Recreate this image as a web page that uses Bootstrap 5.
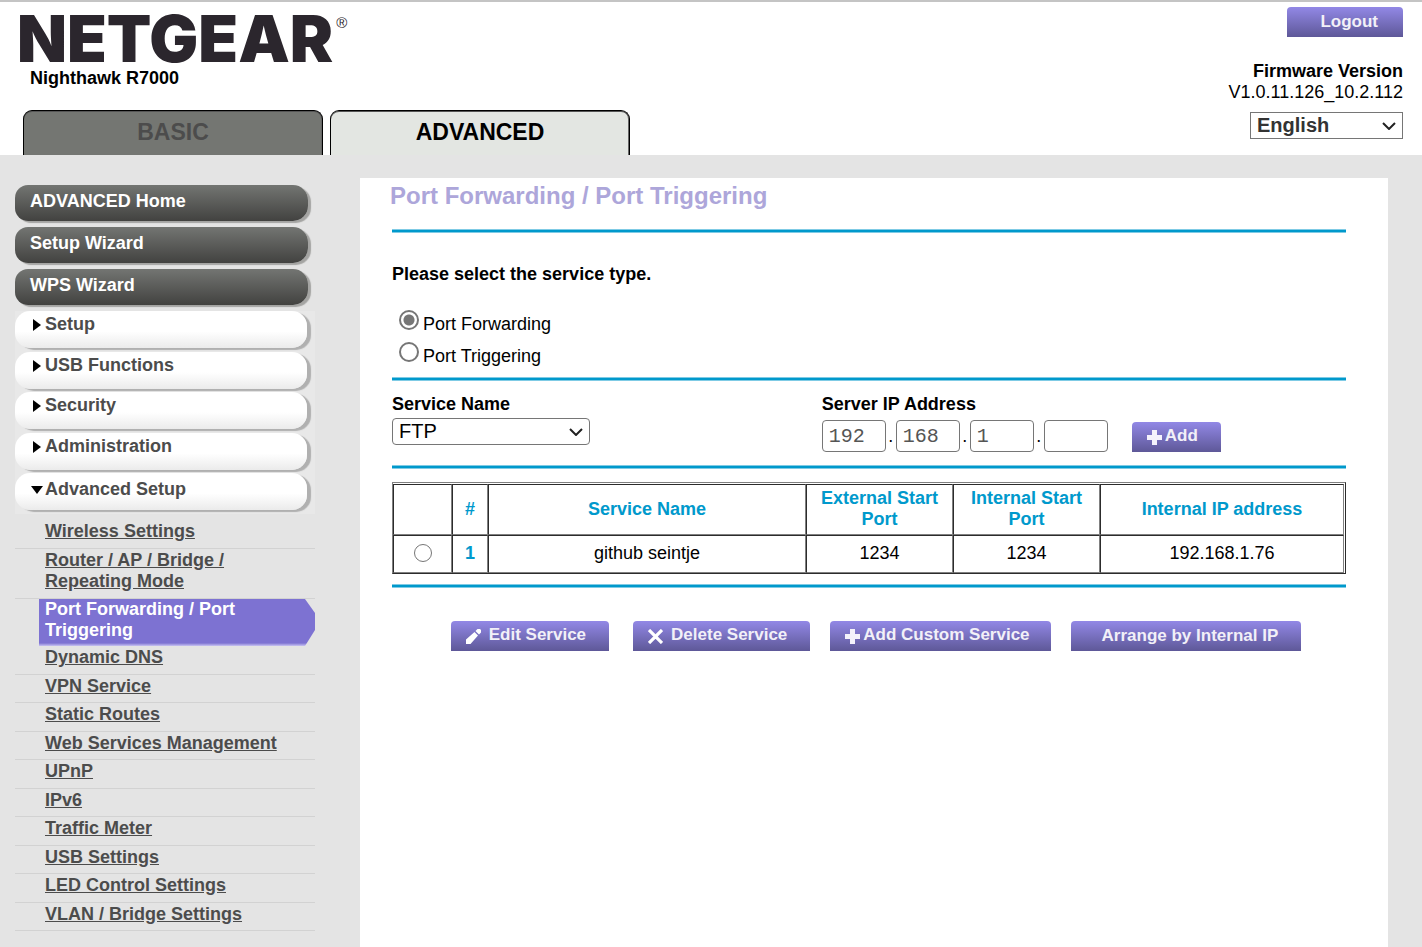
<!DOCTYPE html>
<html lang="en">
<head>
<meta charset="utf-8">
<meta name="viewport" content="width=device-width, initial-scale=1">
<title>NETGEAR Router R7000</title>
<link href="https://cdn.jsdelivr.net/npm/bootstrap@5.3.0/dist/css/bootstrap.min.css" rel="stylesheet">
<style>
  body { font-family: "Liberation Sans", Arial, sans-serif; font-size: 18px; line-height: 21px; color: #000; background: #e4e4e4; }

  /* header */
  .top-bar { background: #fff; border-top: 2px solid #c4c4c4; height: 155px; }
  .brand { padding: 10px 0 0 17px; }
  .wordmark { display: flex; gap: 3px; font-family: Inter, "Liberation Sans", sans-serif; font-weight: 900; font-size: 65px; line-height: 54px; color: #2b262d; }
  .wordmark span { font-family: "Liberation Sans", Arial, sans-serif; font-size: 15px; font-weight: 400; line-height: 22px; }
  .model { padding: 2px 0 0 13px; }
  .account { padding: 5px 19px 0 0; }
  .firmware { margin-top: 24px; }
  .lang-pick { width: 153px; height: 27px; margin-top: 9px; font-weight: bold; color: #333; border: 1px solid #767676; }

  .pick { appearance: none; font-size: 20px; line-height: 22px; padding: 0 24px 2px 6px; background: #fff url("data:image/svg+xml,%3Csvg xmlns='http://www.w3.org/2000/svg' width='14' height='8'%3E%3Cpath d='M1 1l6 6 6-6' fill='none' stroke='%23222' stroke-width='2'/%3E%3C/svg%3E") no-repeat right 6px center; }

  /* tabs */
  .mode-tabs { padding-left: 23px; gap: 7px; }
  .mode-tab { width: 300px; height: 45px; border: 1px solid #000; border-bottom: 0; border-radius: 9px 9px 0 0; box-shadow: inset 0 1px 0 #555, inset -1px 0 0 #666; font-size: 23px; line-height: 42px; font-weight: bold; text-align: center; text-decoration: none; }
  .mode-basic { background: #747672; color: #4c4c4c; }
  .mode-advanced { background: #e3e6e2; color: #000; }

  /* sidebar */
  .side { width: 360px; padding: 30px 45px 15px 15px; font-weight: bold; }
  .side a { display: block; }
  .dark-link { height: 36px; margin: 0 4px 6px 0; padding: 6px 15px; color: #fff; text-decoration: none; border-radius: 13px 15px 15px 13px; background: linear-gradient(#737572, #424240); }
  .dark-list a { width: 293px; box-shadow: 3px 2px 1px #a4a4a2; }
  .menu-list { background: #e8e8e8; }
  .menu-list li { height: 41px; }
  .menu-list li:nth-child(even) { height: 40px; }
  .menu-list a { width: 292px; height: 37px; padding: 3px 0 0 30px; position: relative; color: #4c4c4c; text-decoration: none; border-radius: 15px; background: linear-gradient(#fff 55%, #ebebeb); box-shadow: 4px 2px 1px #b0b0b0; }
  .menu-list a.open { padding-top: 6px; }
  .menu-list svg { position: absolute; left: 16px; top: 8px; }
  .menu-list .open svg { top: 10px; }
  .sub-list li { padding: 1px 30px 6px 30px; border-bottom: 1px solid #d2d2d2; }
  .sub-list li:nth-child(odd) { padding-bottom: 5px; }
  .sub-list li:first-child { padding-top: 7px; padding-bottom: 6px; }
  .sub-list a { color: #4c4c4c; }
  .sub-list li.current { margin-left: 24px; padding: 0 30px 5px 6px; border: 0; background: linear-gradient(#7d72d2 44px, #c9c4f2); clip-path: polygon(0 0, calc(100% - 10px) 0, 100% 14px, 100% 31px, calc(100% - 10px) 100%, 0 100%); }
  .sub-list .current a { color: #fff; text-decoration: none; }

  /* content */
  .panel { background: #fff; margin: 23px 34px 0 0; padding: 0 42px 40px 32px; min-width: 0; min-height: calc(100vh - 178px); }
  .page-title { font-size: 24px; line-height: 36px; font-weight: bold; color: #ada6da; margin: 0 0 15px -2px; }
  .rule { height: 4px; margin: 0; border: solid #7fcbe5; border-width: 1px 0; background: #0099cc; opacity: 1; }
  .ask { margin: 31px 0 25px; font-weight: bold; }
  .kinds { padding-bottom: 3px; }
  .kind { height: 32px; padding-left: 7px; gap: 4px; }
  .kind label { padding-top: 4px; }
  .dot { appearance: none; width: 20px; height: 20px; margin: 0; border: 2px solid #767676; border-radius: 50%; background: #fff; }
  .dot:checked { background: radial-gradient(circle, #767676 5px, #fff 6px); }
  .dot-row { width: 18px; height: 18px; display: block; margin: 0 auto; border-width: 1px; }
  .fields { display: grid; grid-template-columns: 82fr 100fr; height: 84px; padding-top: 13px; }
  .service-pick { width: 198px; height: 27px; margin-top: 3px; border: 1px solid #767676; border-radius: 4px; }
  .octet { width: 64px; height: 32px; border: 1px solid #767676; border-radius: 4px; padding: 0 6px; font: 20px/28px "Liberation Mono", monospace; color: #555; }
  .ip-row { margin-top: 5px; }
  .ip-row .stop { width: 10px; text-align: center; line-height: 32px; }

  .ntg-btn { height: 30px; border: 0; border-radius: 4px 4px 0 0; padding: 0 23px 3px 15px; font-size: 17px; line-height: 27px; font-weight: bold; color: #f2f0f8; background: linear-gradient(#9288e6, #5e5898); white-space: nowrap; display: inline-flex; align-items: center; }
  .ntg-btn svg { margin-top: 3px; flex: none; }
  .near { gap: 3px; }
  .apart { gap: 8px; }
  .plain { padding: 0 25px 1px 33px; }
  .actions .near { padding-right: 21px; }
  .actions .plain { padding-left: 31px; padding-right: 23px; }

  .rules-table { width: 100%; margin: 13px 0 10px; table-layout: fixed; border-collapse: separate; border-spacing: 0; border: 1px solid; border-color: #808080 #2c2c2c #2c2c2c #808080; padding: 1px 1px 0 0; text-align: center; }
  .rules-table th, .rules-table td { border: 1px solid; border-color: #2c2c2c #808080 #808080 #2c2c2c; }
  .rules-table th { color: #0099cc; padding: 3px 2px 4px; }
  .rules-table thead tr { height: 51px; }
  .rules-table tbody tr { height: 38px; }
  .rules-table td { padding: 0 2px 2px; }
  .w-pick { width: 59px; } .w-num { width: 36px; } .w-port { width: 147px; } .w-ip { width: 244px; }
  .actions { margin-top: 33px; padding-left: 14px; gap: 20px; }
</style>
</head>
<body>
<header class="top-bar d-flex justify-content-between">
  <div class="d-flex flex-column justify-content-between">
    <div class="brand">
      <div class="wordmark">NETGEAR<span>®</span></div>
      <div class="model fw-bold">Nighthawk R7000</div>
    </div>
    <nav class="mode-tabs d-flex">
      <a class="mode-tab mode-basic" href="#">BASIC</a>
      <a class="mode-tab mode-advanced" href="#">ADVANCED</a>
    </nav>
  </div>
  <div class="account d-flex flex-column align-items-end">
    <button type="button" class="ntg-btn plain">Logout</button>
    <div class="firmware text-end"><b>Firmware Version</b><br>V1.0.11.126_10.2.112</div>
    <select class="pick lang-pick" aria-label="Language"><option>English</option></select>
  </div>
</header>

<div class="d-flex">
  <nav class="side flex-shrink-0">
    <div class="dark-list">
      <a class="dark-link" href="#">ADVANCED Home</a>
      <a class="dark-link" href="#">Setup Wizard</a>
      <a class="dark-link" href="#">WPS Wizard</a>
    </div>
    <ul class="menu-list list-unstyled mb-0">
      <li><a href="#"><svg width="12" height="12"><path d="M2 0l8 6-8 6z"/></svg>Setup</a></li>
      <li><a href="#"><svg width="12" height="12"><path d="M2 0l8 6-8 6z"/></svg>USB Functions</a></li>
      <li><a href="#"><svg width="12" height="12"><path d="M2 0l8 6-8 6z"/></svg>Security</a></li>
      <li><a href="#"><svg width="12" height="12"><path d="M2 0l8 6-8 6z"/></svg>Administration</a></li>
      <li><a class="open" href="#"><svg width="12" height="12"><path d="M0 3h12l-6 8z"/></svg>Advanced Setup</a></li>
    </ul>
    <ul class="sub-list list-unstyled mb-0">
      <li><a href="#">Wireless Settings</a></li>
      <li><a href="#">Router / AP / Bridge / Repeating Mode</a></li>
      <li class="current"><a href="#">Port Forwarding / Port Triggering</a></li>
      <li><a href="#">Dynamic DNS</a></li>
      <li><a href="#">VPN Service</a></li>
      <li><a href="#">Static Routes</a></li>
      <li><a href="#">Web Services Management</a></li>
      <li><a href="#">UPnP</a></li>
      <li><a href="#">IPv6</a></li>
      <li><a href="#">Traffic Meter</a></li>
      <li><a href="#">USB Settings</a></li>
      <li><a href="#">LED Control Settings</a></li>
      <li><a href="#">VLAN / Bridge Settings</a></li>
    </ul>
  </nav>

  <main class="panel flex-grow-1">
    <h1 class="page-title">Port Forwarding / Port Triggering</h1>
    <hr class="rule">
    <p class="ask">Please select the service type.</p>
    <div class="kinds">
      <div class="kind d-flex align-items-start"><input class="dot" type="radio" name="kind" id="fwd" checked><label for="fwd">Port Forwarding</label></div>
      <div class="kind d-flex align-items-start"><input class="dot" type="radio" name="kind" id="trg"><label for="trg">Port Triggering</label></div>
    </div>
    <hr class="rule">
    <div class="fields">
      <div>
        <label class="fw-bold d-block" for="svc">Service Name</label>
        <select class="pick service-pick" id="svc"><option>FTP</option></select>
      </div>
      <div>
        <label class="fw-bold d-block" for="ip1">Server IP Address</label>
        <div class="ip-row d-flex">
          <input class="octet" id="ip1" type="text" value="192"><span class="stop">.</span>
          <input class="octet" type="text" value="168" aria-label="Second part"><span class="stop">.</span>
          <input class="octet" type="text" value="1" aria-label="Third part"><span class="stop">.</span>
          <input class="octet" type="text" value="" aria-label="Fourth part">
          <button type="button" class="ntg-btn near ms-4 align-self-end"><svg width="15" height="15"><path d="M5 0h5v5h5v5h-5v5H5v-5H0V5h5z" fill="#f4f2fb"/></svg>Add</button>
        </div>
      </div>
    </div>
    <hr class="rule">
    <table class="rules-table">
      <colgroup><col class="w-pick"><col class="w-num"><col><col class="w-port"><col class="w-port"><col class="w-ip"></colgroup>
      <thead>
        <tr><th></th><th>#</th><th>Service Name</th><th>External Start Port</th><th>Internal Start Port</th><th>Internal IP address</th></tr>
      </thead>
      <tbody>
        <tr><td><input class="dot dot-row" type="radio" name="rule" aria-label="Select rule 1"></td><th>1</th><td>github seintje</td><td>1234</td><td>1234</td><td>192.168.1.76</td></tr>
      </tbody>
    </table>
    <hr class="rule">
    <div class="actions d-flex flex-wrap justify-content-center">
      <button type="button" class="ntg-btn apart me-1"><svg width="15" height="15" fill="#fff"><path d="M0 15V10.500L8.500 3l3.500 3.500L4.500 15zM9.500 2L11.500 0H14l1 1v2.500L13 5.500z"/></svg>Edit Service</button>
      <button type="button" class="ntg-btn apart"><svg width="15" height="15"><path d="M1 1l13 13M14 1L1 14" stroke="#fff" stroke-width="3.200"/></svg>Delete Service</button>
      <button type="button" class="ntg-btn near"><svg width="15" height="15"><path d="M5 0h5v5h5v5h-5v5H5v-5H0V5h5z" fill="#f4f2fb"/></svg>Add Custom Service</button>
      <button type="button" class="ntg-btn plain">Arrange by Internal IP</button>
    </div>
  </main>
</div>
<script src="https://cdn.jsdelivr.net/npm/bootstrap@5.3.0/dist/js/bootstrap.bundle.min.js"></script>
</body>
</html>
